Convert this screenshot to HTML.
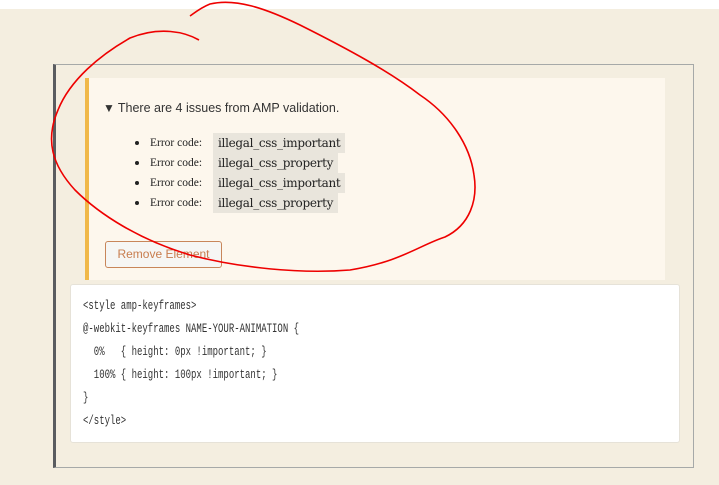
<!DOCTYPE html>
<html><head><style>
*{margin:0;padding:0;box-sizing:border-box}
body{width:719px;height:485px;background:#fff;position:relative;overflow:hidden;font-family:"Liberation Sans",sans-serif}
.bg{position:absolute;left:0;top:9px;width:719px;height:476px;background:#f4eee0}
.box{position:absolute;left:53px;top:64px;width:641px;height:404px;border:1px solid #a6a9a8;border-left:3px solid #5a5c60}
.notice{position:absolute;left:85px;top:78px;width:580px;height:202px;background:#fdf7ed;border-left:4px solid #f0b849}
.sum{position:absolute;left:103px;top:101px;font-size:12.5px;color:#333}
.sum i{font-style:normal;font-size:12px;margin-right:3px}
.li{position:absolute;left:133px;font-family:"Liberation Serif",serif;font-size:11.5px;color:#222;height:20px;line-height:20px}
.li b{display:inline-block;width:4px;height:4px;border-radius:50%;background:#222;margin-right:11px;vertical-align:middle;margin-left:2px}
.li span{position:absolute;left:80px;top:0;background:#e9e5dc;padding:0 5px;font-family:"DejaVu Serif","Liberation Serif",serif;font-size:12px;letter-spacing:-0.3px;white-space:nowrap}
.btn{position:absolute;left:105px;top:241px;width:117px;height:27px;border:1px solid #c8865a;border-radius:3px;background:#f6f6f4;color:#c87d4e;font-size:12px;line-height:25px;text-align:center}
.code{position:absolute;left:70px;top:284px;width:610px;height:159px;background:#fff;border:1px solid #e6e2d8;border-radius:3px}
.code div{position:absolute;left:12px;top:10px;font-family:"Liberation Mono",monospace;font-size:12.5px;color:#333;line-height:23px;white-space:pre;transform:scaleX(0.72);transform-origin:0 0}
svg{position:absolute;left:0;top:0}
</style></head><body>
<div class="bg"></div>
<div class="box"></div>
<div class="notice"></div>
<div class="sum"><i>▼</i>There are 4 issues from AMP validation.</div>
<div class="li" style="top:133px"><b></b>Error code:<span>illegal_css_important</span></div>
<div class="li" style="top:153px"><b></b>Error code:<span>illegal_css_property</span></div>
<div class="li" style="top:173px"><b></b>Error code:<span>illegal_css_important</span></div>
<div class="li" style="top:193px"><b></b>Error code:<span>illegal_css_property</span></div>
<div class="btn">Remove Element</div>
<div class="code"><div>&lt;style amp-keyframes&gt;
@-webkit-keyframes NAME-YOUR-ANIMATION {
  0%   { height: 0px !important; }
  100% { height: 100px !important; }
}
&lt;/style&gt;</div></div>
<svg width="719" height="485"><path d="M199,40 C185,32 160,26 130,38 C100,55 70,80 58,110 C45,140 52,165 75,190 C100,215 140,240 190,255 C240,268 300,274 350,270 C400,262 420,245 445,237 C470,225 478,200 474,175 C470,145 450,115 420,95 C390,72 350,50 300,25 C265,8 235,-2 210,4 C200,8 193,14 190,16" fill="none" stroke="#ee0000" stroke-width="1.6"/></svg>
</body></html>
